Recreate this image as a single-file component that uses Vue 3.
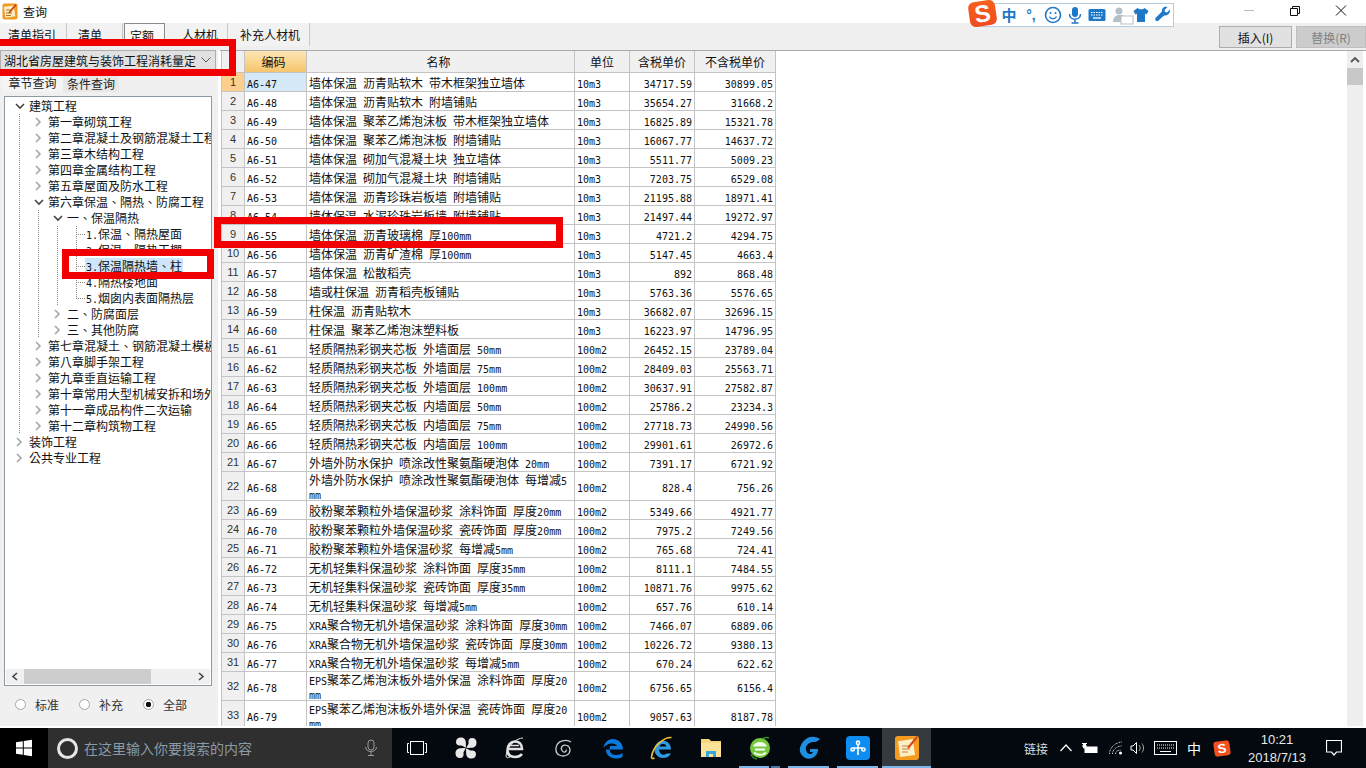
<template>
  <div class="screen">
    <div class="window">
      <!-- title bar -->
      <div class="titlebar">
        <svg class="app-icon" width="16" height="17" viewBox="0 0 16 17">
          <rect x="0.500" y="0.500" width="15" height="16" rx="2" fill="#f09a1e" />
          <rect x="2.500" y="3" width="10" height="11" fill="#fdeec4" transform="rotate(-8 8 8)" />
          <path d="M4 7h6M4 10h6M4 12.500h5" stroke="#b9722a" stroke-width="1" />
          <path d="M7 10L14 1.500" stroke="#c8401a" stroke-width="1.800" />
        </svg>
        <span class="title">查询</span>
        <div class="win-controls">
          <svg width="46" height="22" viewBox="0 0 46 22"><path d="M18 10.500h10" stroke="#b8b8b8" /></svg>
          <svg width="46" height="22" viewBox="0 0 46 22"><path d="M18.500 8.500h7v7h-7zM20.500 8V6.500h7v7H26" fill="none" stroke="#111" /></svg>
          <svg width="46" height="22" viewBox="0 0 46 22"><path d="M18 5.500l10 10M28 5.500l-10 10" stroke="#111" /></svg>
        </div>
      </div>

      <!-- tabs and actions -->
      <div class="toolbar">
        <div
          v-for="t in tabs"
          :key="t.name"
          class="tab"
          :class="{ pressed: t.pressed }"
          :style="{ width: t.w + 'px', paddingLeft: t.pad + 'px' }"
        >
          <span>{{ t.name }}</span>
        </div>
        <div class="actions">
          <button class="btn">插入(I)</button>
          <button class="btn disabled">替换(R)</button>
        </div>
      </div>

      <div class="body">
        <!-- left side -->
        <div class="side">
          <div class="select">
            <span class="select-text">湖北省房屋建筑与装饰工程消耗量定</span>
            <svg width="10" height="6" viewBox="0 0 10 6"><path d="M0.500 0.500L5 5l4.500-4.500" fill="none" stroke="#555" /></svg>
          </div>
          <div class="side-tabs">
            <span class="side-tab on">章节查询</span>
            <span class="side-tab">条件查询</span>
          </div>
          <div class="tree-box">
            <div class="tree">
              <div v-for="n in tree" :key="n.text" class="node">
                <i v-for="g in n.depth" :key="g" class="guide"></i>
                <i v-if="n.leaf" class="leaf" :class="{ last: n.last }"></i>
                <i v-else class="toggle">
                  <svg v-if="n.open" width="10" height="7" viewBox="0 0 10 7"><path d="M1 1l4 4 4-4" fill="none" stroke="#444" stroke-width="1.600" /></svg>
                  <svg v-else-if="n.arrow" width="7" height="10" viewBox="0 0 7 10"><path d="M1 1l4 4-4 4" fill="none" stroke="#a6a6a6" stroke-width="1.600" /></svg>
                </i>
                <span class="node-text" :class="{ selected: n.selected }">
                  <span v-for="(p, j) in splitRuns(n.text)" :key="j" :class="{ asc: p.asc }">{{ p.text }}</span>
                </span>
              </div>
            </div>
            <div class="hscroll">
              <svg width="18" height="15" viewBox="0 0 18 15"><path d="M11 4L7 7.500l4 3.500" fill="none" stroke="#444" stroke-width="1.600" /></svg>
              <div class="hscroll-track"><div class="hscroll-thumb"></div></div>
              <svg width="18" height="15" viewBox="0 0 18 15"><path d="M7 4l4 3.500L7 11" fill="none" stroke="#444" stroke-width="1.600" /></svg>
            </div>
          </div>
          <div class="radios">
            <label v-for="r in radios" :key="r.text" class="radio">
              <i class="dot" :class="{ checked: r.checked }"></i>{{ r.text }}
            </label>
          </div>
        </div>

        <!-- quota table -->
        <div class="main">
          <div class="table-wrap">
            <table class="grid">
              <colgroup>
                <col style="width: 23px" />
                <col style="width: 62px" />
                <col style="width: 268px" />
                <col style="width: 55px" />
                <col style="width: 65px" />
                <col style="width: 81px" />
              </colgroup>
              <thead>
                <tr>
                  <th></th>
                  <th class="sorted shifted">编码</th>
                  <th class="shifted">名称</th>
                  <th>单位</th>
                  <th>含税单价</th>
                  <th>不含税单价</th>
                </tr>
              </thead>
              <tbody>
                <tr v-for="(r, i) in rows" :key="r.code">
                  <td class="idx" :class="{ current: i === 0 }">{{ i + 1 }}</td>
                  <td :class="{ cursor: i === 0 }"><span class="asc">{{ r.code }}</span></td>
                  <td class="name">
                    <span v-for="(p, j) in splitRuns(r.name)" :key="j" :class="{ asc: p.asc }">{{ p.text }}</span>
                  </td>
                  <td><span class="asc">{{ r.unit }}</span></td>
                  <td class="num"><span class="asc">{{ r.tax }}</span></td>
                  <td class="num"><span class="asc">{{ r.noTax }}</span></td>
                </tr>
              </tbody>
            </table>
          </div>
          <div class="vscroll">
            <svg width="16" height="17" viewBox="0 0 16 17"><path d="M4 11l4-4 4 4" fill="none" stroke="#555" stroke-width="1.800" /></svg>
            <div class="vthumb"></div>
          </div>
        </div>
      </div>

      <!-- annotation boxes -->
      <div class="mark mark-select"></div>
      <div class="mark mark-node"></div>
      <div class="mark mark-row"></div>

      <!-- floating IME bar -->
      <div class="ime">
        <span class="ime-logo"><b>S</b></span>
        <span class="ime-item zh">中</span>
        <span class="ime-item punct">°,</span>
        <svg class="ime-item" width="20" height="20" viewBox="0 0 20 20"><circle cx="10" cy="10" r="7.500" fill="none" stroke="#1e78c8" stroke-width="1.600" /><circle cx="7.500" cy="8" r="1" fill="#1e78c8" /><circle cx="12.500" cy="8" r="1" fill="#1e78c8" /><path d="M6.500 11.500c1.500 3 5.500 3 7 0" fill="none" stroke="#1e78c8" stroke-width="1.300" /></svg>
        <svg class="ime-item" width="20" height="20" viewBox="0 0 20 20"><rect x="7" y="2" width="6" height="10" rx="3" fill="#1e78c8" /><path d="M4.500 9c0 7 11 7 11 0M10 14.500V18M6.500 18h7" fill="none" stroke="#1e78c8" stroke-width="1.500" /></svg>
        <svg class="ime-item" width="20" height="20" viewBox="0 0 20 20"><rect x="1.500" y="4" width="17" height="12" rx="1.500" fill="#1e78c8" /><path d="M4 7.500h12M4 10h12" stroke="#fff" stroke-dasharray="1.500 1" /><path d="M6 13h8" stroke="#fff" stroke-width="1.300" /></svg>
        <svg class="ime-item person" width="24" height="20" viewBox="0 0 24 20"><circle cx="9" cy="6" r="3.500" fill="#b4bfc8" /><path d="M3 17c0-5 3-7 6-7h4v7z" fill="#b4bfc8" /><rect x="11" y="11" width="12" height="8" fill="#fff" stroke="#b4bfc8" /></svg>
        <svg class="ime-item shirt" width="20" height="20" viewBox="0 0 20 20"><path d="M6.500 3L2.500 6l2 3.500 1.500-1V17h8V8.500l1.500 1 2-3.500-4-3c-1 1.800-5.500 1.800-7 0z" fill="#1e78c8" /></svg>
        <svg class="ime-item" width="20" height="20" viewBox="0 0 20 20"><path d="M17 4.500l-3 3-2-.5-.5-2 3-3c-3-1-6 1-5.500 4.500L3 12.500c-2 2 .5 5 2.500 3L11 10.500c3.500.5 6.500-2.500 6-6z" fill="#1e78c8" /></svg>
      </div>
    </div>

    <!-- taskbar -->
    <div class="taskbar">
      <div class="start">
        <svg width="18" height="18" viewBox="0 0 18 18"><path d="M1 3.200l6.800-1v6.200H1zM8.800 2l8.200-1.200v7.600H8.800zM1 9.600h6.800v6.200l-6.800-1zM8.800 9.600H17v7.600L8.800 16z" fill="#fff" /></svg>
      </div>
      <div class="search">
        <i class="cortana"></i>
        <span class="search-text">在这里输入你要搜索的内容</span>
        <svg width="14" height="18" viewBox="0 0 14 18"><rect x="4" y="1" width="6" height="10" rx="3" fill="none" stroke="#9a9a9a" /><path d="M1.500 8c0 6 11 6 11 0M7 13v3.500M4 16.500h6" fill="none" stroke="#9a9a9a" /></svg>
      </div>
      <div class="apps">
        <div class="app">
          <svg width="20" height="14" viewBox="0 0 20 14"><rect x="3.500" y=".500" width="13" height="13" fill="none" stroke="#fff" /><path d="M2 2.500H.500v9H2M18 2.500h1.500v9H18" fill="none" stroke="#fff" /></svg>
        </div>
        <div class="app">
          <svg width="22" height="22" viewBox="0 0 22 22"><g fill="#e8e8e8"><path d="M11 10.500C8 10 7.500 8 5.500 8.500 3 9 1 7.500 1 5c0-3 2-4.500 4.500-4.500 3.500 0 5 2 5.300 4.500z" /><path d="M11.500 11c.5-3 2.500-3.500 2-5.500C13 3 14.500 1 17 1c3 0 4.500 2 4.500 4.500 0 3.500-2 5-4.500 5.300z" /><path d="M11 11.500c3 .5 3.500 2.500 5.500 2 2.500-.5 4.500 1 4.500 3.500 0 3-2 4.500-4.500 4.500-3.500 0-5-2-5.300-4.500z" /><path d="M10.500 11c-.5 3-2.500 3.500-2 5.500.5 2.500-1 4.500-3.500 4.500-3 0-4.500-2-4.500-4.500 0-3.500 2-5 4.500-5.300z" /></g></svg>
        </div>
        <div class="app">
          <svg width="22" height="24" viewBox="0 0 22 24"><path d="M5 13h13C18 8 15 5.500 11 5.500S3.500 9 3.500 14 7 21 11 21c3 0 5.500-1 7-3" fill="none" stroke="#e4e4e4" stroke-width="2.600" /><path d="M6 9.500h9" stroke="#e4e4e4" stroke-width="1.500" /><path d="M19 2C13 2 3 9 2 20c0 2 2 2 4 1" fill="none" stroke="#e4e4e4" /></svg>
        </div>
        <div class="app">
          <svg width="20" height="20" viewBox="0 0 20 20"><path d="M17 4C13 1 3 2 2 10s7 9 11 7 4-8 0-9.500-7 2-5 5 5 1 4-1" fill="none" stroke="#c9c9c9" stroke-width="1.300" /></svg>
        </div>
        <div class="app">
          <svg width="22" height="22" viewBox="0 0 22 22"><path d="M4 12.500h17C21 6 16 2 10.500 2 6 2 2 6 1.500 11c2-3 5-4.500 8-4.500 3 0 5 1 5.500 2.500H8c-1 4 0 9 6 9 2.500 0 5-.8 6.500-2v4c-2 1-4 1.500-6.500 1.500C8 21.500 4 18 4 12.500z" fill="#0b78dc" /></svg>
        </div>
        <div class="app">
          <svg width="24" height="24" viewBox="0 0 24 24"><path d="M5 13.500h16C21 8 17 4.500 13 4.500S4.500 8 4.500 13.500 9 22 13 22c3.500 0 6.500-1.500 8-4.500h-4.500c-2.500 2.500-7 1.500-7.500-4zM9.500 10.500c.5-2 2-2.500 3.500-2.500s3 .5 3.500 2.500z" fill="#2f9be4" fill-rule="evenodd" /><path d="M21.500 1.500C14 1 3 10 1.500 21c-.2 2 2 1.500 3 1" fill="none" stroke="#f1c232" stroke-width="1.600" /></svg>
        </div>
        <div class="app">
          <svg width="22" height="20" viewBox="0 0 22 20"><path d="M1 1h8l2 2h10v16H1z" fill="#f5d67a" /><rect x="1" y="5" width="20" height="14" fill="#fbe39a" /><path d="M6 19v-6h10v6h-3v-3H9v3z" fill="#3aa6e0" /></svg>
        </div>
        <div class="app under split">
          <svg width="24" height="24" viewBox="0 0 24 24"><circle cx="12" cy="12" r="10" fill="#76c83e" /><path d="M5 10.500C6.500 4.500 17.500 4.500 19 10.500z" fill="#f2fbe8" /><path d="M7 13.500h10" stroke="#fff" stroke-width="2" /><path d="M6 16.500c3 3 9 3 12 0" fill="none" stroke="#f2fbe8" stroke-width="1.800" /><path d="M21 2c-2-1-4-.5-6 .5M3 18c1 3 3 4.500 6 5" fill="none" stroke="#2d8a22" stroke-width="1.500" /></svg>
        </div>
        <div class="app under">
          <svg width="24" height="24" viewBox="0 0 24 24"><path d="M23 3c-5-3-10-3-14 0C4 7 1 13 4 18c3 5 9 6 13 3 3-2 4-5 4-8h-8v3h3c-1 3-6 3-7-2-1-4 3-8 7-8 2 0 4 0 7-3z" fill="#1e8fe0" /></svg>
        </div>
        <div class="app under">
          <svg width="24" height="24" viewBox="0 0 24 24"><rect width="24" height="24" rx="4" fill="#0f8cf0" /><path d="M12 9c-2-1-2-4 0-4s2 3 0 4v10M12 12H6.500c-2 0-2 3 0 3s2-1.500 1.500-3M12 12h5.500c2 0 2 3 0 3s-2-1.500-1.500-3" fill="none" stroke="#fff" stroke-width="1.600" /></svg>
        </div>
        <div class="app under active">
          <svg width="24" height="24" viewBox="0 0 24 24"><rect width="24" height="24" rx="3" fill="#f39c1f" /><rect x="4" y="4" width="15" height="16" fill="#fdeec4" transform="rotate(-8 12 12)" /><path d="M7 10h8M7 13h8M7 16h6" stroke="#c08040" /><path d="M13 12L22 1" stroke="#d8451b" stroke-width="2" /></svg>
        </div>
      </div>
      <div class="tray">
        <span class="tray-link">链接</span>
        <svg class="t-up" width="12" height="8" viewBox="0 0 12 8"><path d="M.500 7l5.500-6 5.500 6" fill="none" stroke="#fff" stroke-width="1.200" /></svg>
        <svg class="t-bat" width="16" height="12" viewBox="0 0 16 12"><path d="M0 1.500h5M0 4h5M1.500 1.500h2v4.500h-2z" fill="#fff" stroke="#fff" /><rect x="2.500" y="4.500" width="13" height="6.500" fill="#fff" /></svg>
        <svg class="t-wifi" width="14" height="14" viewBox="0 0 14 14"><path d="M.500 13C.500 7 6 1.500 13 1M3.500 13c0-4 4-8 9-8M6.500 13c0-2 2-4 5-4" fill="none" stroke="#cfcfcf" stroke-dasharray="1 .6" /><circle cx="11.500" cy="12" r="1.500" fill="#fff" /></svg>
        <svg class="t-vol" width="16" height="14" viewBox="0 0 16 14"><path d="M1 5h2l3.500-3.500v11L3 9H1z" fill="none" stroke="#fff" /><path d="M9 4c1.500 2 1.500 4 0 6M12 2.500c2 3 2 6 0 9" fill="none" stroke="#aaa" /></svg>
        <svg class="t-kbd" width="23" height="14" viewBox="0 0 23 14"><rect x=".500" y=".500" width="22" height="13" fill="none" stroke="#fff" /><path d="M3 4h17M3 7h17" stroke="#fff" stroke-dasharray="1 1" /><path d="M6 10.500h11" stroke="#fff" /></svg>
        <span class="t-zh">中</span>
        <span class="t-sogou"><b>S</b></span>
        <div class="clock"><span>10:21</span><span>2018/7/13</span></div>
        <svg class="t-note" width="16" height="17" viewBox="0 0 16 17"><path d="M.500 .500h15v11.500h-5l-2.500 3-2.500-3h-5z" fill="none" stroke="#fff" stroke-width="1.200" /></svg>
      </div>
    </div>
  </div>
</template>

<script setup>
const tabs = [
  { name: '清单指引', w: 67, pad: 8 },
  { name: '清单', w: 56, pad: 11 },
  { name: '定额', w: 41, pad: 5, pressed: true },
  { name: '人材机', w: 58, pad: 12 },
  { name: '补充人材机', w: 82, pad: 12 }
]

const radios = [
  { text: '标准' },
  { text: '补充' },
  { text: '全部', checked: true }
]

const tree = [
  { depth: 0, open: true, text: '建筑工程' },
  { depth: 1, arrow: true, text: '第一章砌筑工程' },
  { depth: 1, arrow: true, text: '第二章混凝土及钢筋混凝土工程' },
  { depth: 1, arrow: true, text: '第三章木结构工程' },
  { depth: 1, arrow: true, text: '第四章金属结构工程' },
  { depth: 1, arrow: true, text: '第五章屋面及防水工程' },
  { depth: 1, open: true, text: '第六章保温、隔热、防腐工程' },
  { depth: 2, open: true, text: '一、保温隔热' },
  { depth: 3, leaf: true, text: '1.保温、隔热屋面' },
  { depth: 3, leaf: true, text: '2.保温、隔热工棚' },
  { depth: 3, leaf: true, selected: true, text: '3.保温隔热墙、柱' },
  { depth: 3, leaf: true, text: '4.隔热楼地面' },
  { depth: 3, leaf: true, last: true, text: '5.烟囱内表面隔热层' },
  { depth: 2, arrow: true, text: '二、防腐面层' },
  { depth: 2, arrow: true, text: '三、其他防腐' },
  { depth: 1, arrow: true, text: '第七章混凝土、钢筋混凝土模板及支架工程' },
  { depth: 1, arrow: true, text: '第八章脚手架工程' },
  { depth: 1, arrow: true, text: '第九章垂直运输工程' },
  { depth: 1, arrow: true, text: '第十章常用大型机械安拆和场外运输' },
  { depth: 1, arrow: true, text: '第十一章成品构件二次运输' },
  { depth: 1, arrow: true, text: '第十二章构筑物工程' },
  { depth: 0, arrow: true, text: '装饰工程' },
  { depth: 0, arrow: true, text: '公共专业工程' }
]

const raw = `A6-47|墙体保温 沥青贴软木 带木框架独立墙体|10m3|34717.59|30899.05
A6-48|墙体保温 沥青贴软木 附墙铺贴|10m3|35654.27|31668.2
A6-49|墙体保温 聚苯乙烯泡沫板 带木框架独立墙体|10m3|16825.89|15321.78
A6-50|墙体保温 聚苯乙烯泡沫板 附墙铺贴|10m3|16067.77|14637.72
A6-51|墙体保温 砌加气混凝土块 独立墙体|10m3|5511.77|5009.23
A6-52|墙体保温 砌加气混凝土块 附墙铺贴|10m3|7203.75|6529.08
A6-53|墙体保温 沥青珍珠岩板墙 附墙铺贴|10m3|21195.88|18971.41
A6-54|墙体保温 水泥珍珠岩板墙 附墙铺贴|10m3|21497.44|19272.97
A6-55|墙体保温 沥青玻璃棉 厚100mm|10m3|4721.2|4294.75
A6-56|墙体保温 沥青矿渣棉 厚100mm|10m3|5147.45|4663.4
A6-57|墙体保温 松散稻壳|10m3|892|868.48
A6-58|墙或柱保温 沥青稻壳板铺贴|10m3|5763.36|5576.65
A6-59|柱保温 沥青贴软木|10m3|36682.07|32696.15
A6-60|柱保温 聚苯乙烯泡沫塑料板|10m3|16223.97|14796.95
A6-61|轻质隔热彩钢夹芯板 外墙面层 50mm|100m2|26452.15|23789.04
A6-62|轻质隔热彩钢夹芯板 外墙面层 75mm|100m2|28409.03|25563.71
A6-63|轻质隔热彩钢夹芯板 外墙面层 100mm|100m2|30637.91|27582.87
A6-64|轻质隔热彩钢夹芯板 内墙面层 50mm|100m2|25786.2|23234.3
A6-65|轻质隔热彩钢夹芯板 内墙面层 75mm|100m2|27718.73|24990.56
A6-66|轻质隔热彩钢夹芯板 内墙面层 100mm|100m2|29901.61|26972.6
A6-67|外墙外防水保护 喷涂改性聚氨酯硬泡体 20mm|100m2|7391.17|6721.92
A6-68|外墙外防水保护 喷涂改性聚氨酯硬泡体 每增减5mm|100m2|828.4|756.26
A6-69|胶粉聚苯颗粒外墙保温砂浆 涂料饰面 厚度20mm|100m2|5349.66|4921.77
A6-70|胶粉聚苯颗粒外墙保温砂浆 瓷砖饰面 厚度20mm|100m2|7975.2|7249.56
A6-71|胶粉聚苯颗粒外墙保温砂浆 每增减5mm|100m2|765.68|724.41
A6-72|无机轻集料保温砂浆 涂料饰面 厚度35mm|100m2|8111.1|7484.55
A6-73|无机轻集料保温砂浆 瓷砖饰面 厚度35mm|100m2|10871.76|9975.62
A6-74|无机轻集料保温砂浆 每增减5mm|100m2|657.76|610.14
A6-75|XRA聚合物无机外墙保温砂浆 涂料饰面 厚度30mm|100m2|7466.07|6889.06
A6-76|XRA聚合物无机外墙保温砂浆 瓷砖饰面 厚度30mm|100m2|10226.72|9380.13
A6-77|XRA聚合物无机外墙保温砂浆 每增减5mm|100m2|670.24|622.62
A6-78|EPS聚苯乙烯泡沫板外墙外保温 涂料饰面 厚度20mm|100m2|6756.65|6156.4
A6-79|EPS聚苯乙烯泡沫板外墙外保温 瓷砖饰面 厚度20mm|100m2|9057.63|8187.78`

const rows = raw.split('\n').map(line => {
  const [code, name, unit, tax, noTax] = line.split('|')
  return { code, name, unit, tax, noTax }
})

// ascii runs get the narrow mono face, the rest stays CJK
const splitRuns = (text) =>
  text.match(/[\x00-\x7f]+|[^\x00-\x7f]+/g).map(t => ({ text: t, asc: /^[\x00-\x7f]/.test(t) }))
</script>

<style>
html, body {
  margin: 0;
  overflow: hidden;
}
</style>

<style scoped>
.screen {
  width: 1366px;
  height: 768px;
  display: flex;
  flex-direction: column;
  overflow: hidden;
  font-family: "Noto Sans CJK SC", sans-serif;
  font-size: 12px;
  color: #111;
}

.window {
  position: relative;
  height: 728px;
  display: flex;
  flex-direction: column;
  background: #fff;
  padding-bottom: 2px;
  box-sizing: border-box;
}

.titlebar {
  height: 23px;
  flex: none;
  display: flex;
  align-items: center;
  background: #fff;
  padding-left: 2px;
}

.app-icon {
  margin-right: 5px;
}

.win-controls {
  margin-left: auto;
  display: flex;
  margin-top: -2px;
  padding-right: 2px;
}

.toolbar {
  height: 27px;
  flex: none;
  display: flex;
  background: #efefef;
}

.tab {
  height: 23px;
  box-sizing: border-box;
  flex: none;
  border-right: 1px solid #c8c8c8;
  display: flex;
  align-items: center;
  background: #f2f2f2;
}

.tab.pressed {
  border: 1px solid #8a8a8a;
  border-bottom: none;
  margin: 0 5px 0 1px;
  background: #fafafa;
  box-shadow: 5px 0 0 #f2f2f2, 6px 0 0 #c8c8c8;
}

.actions {
  margin-left: auto;
  display: flex;
  gap: 4px;
  padding-top: 3px;
}

.btn {
  width: 73px;
  height: 22px;
  padding: 0;
  border: 1px solid #adadad;
  background: #e1e1e1;
  font-family: inherit;
  font-size: 12px;
  color: #111;
}

.btn.disabled {
  width: 70px;
  background: #ccc;
  border-color: #bfbfbf;
  color: #808080;
}

.body {
  flex: 1;
  min-height: 0;
  display: flex;
}

.side {
  width: 218px;
  flex: none;
  display: flex;
  flex-direction: column;
  margin-right: 2px;
  background: #f0f0f0;
}

.select {
  width: 216px;
  flex: none;
  height: 20px;
  box-sizing: border-box;
  padding: 0 4px 0 3px;
  background: #e1e1e1;
  border: 1px solid #adadad;
  display: flex;
  align-items: center;
  justify-content: space-between;
}

.select-text {
  white-space: nowrap;
}

.side-tabs {
  height: 20px;
  margin-top: 2px;
  flex: none;
  display: flex;
  padding-left: 2px;
}

.side-tab {
  width: 56px;
  text-align: center;
  line-height: 24px;
  background: #e8e8e8;
  color: #222;
}

.side-tab.on {
  width: 61px;
  line-height: 22px;
  background: #f4f4f4;
}

.tree-box {
  margin: 4px 6px 0 4px;
  height: 590px;
  flex: none;
  box-sizing: border-box;
  border: 1px solid #8e9aa3;
  background: #fff;
  display: flex;
  flex-direction: column;
}

.tree {
  flex: 1;
  min-height: 0;
  overflow: hidden;
  padding: 1px 0 0 5px;
}

.node {
  height: 16px;
  display: flex;
  align-items: center;
  white-space: nowrap;
}

.guide {
  width: 19px;
  height: 16px;
  flex: none;
  background: repeating-linear-gradient(to bottom, #888 0 1px, transparent 1px 2px) 9px 0 / 1px 100% no-repeat;
}

.toggle {
  width: 19px;
  height: 16px;
  flex: none;
  display: flex;
  align-items: center;
  justify-content: center;
}

.leaf {
  width: 19px;
  height: 16px;
  flex: none;
  background:
    repeating-linear-gradient(to bottom, #888 0 1px, transparent 1px 2px) 9px 0 / 1px 100% no-repeat,
    repeating-linear-gradient(to right, #888 0 1px, transparent 1px 2px) 9px 8px / 10px 1px no-repeat;
}

.leaf.last {
  background:
    repeating-linear-gradient(to bottom, #888 0 1px, transparent 1px 2px) 9px 0 / 1px 9px no-repeat,
    repeating-linear-gradient(to right, #888 0 1px, transparent 1px 2px) 9px 8px / 10px 1px no-repeat;
}

.node-text {
  margin-left: -1px;
  padding: 0 1px;
  line-height: 16px;
  font-family: "Noto Sans CJK TC", sans-serif;
}

.node-text.selected {
  background: #cde6fb;
}

.hscroll {
  height: 15px;
  margin: 0 1px 1px;
  flex: none;
  display: flex;
  background: #f0f0f0;
}

.hscroll-track {
  flex: 1;
}

.hscroll-thumb {
  width: 127px;
  height: 100%;
  background: #cdcdcd;
}

.radios {
  flex: 1;
  display: flex;
  padding: 10px 0 0 15px;
  gap: 20px;
}

.radio {
  display: flex;
  align-items: center;
  flex: none;
  gap: 9px;
  height: 16px;
  width: 44px;
  white-space: nowrap;
  color: #333;
}

.dot {
  width: 9px;
  height: 9px;
  flex: none;
  border: 1px solid #a5a5a5;
  border-radius: 50%;
  background: #fff;
}

.dot.checked {
  background: radial-gradient(circle, #111 0 2.500px, #fff 3px);
}

.main {
  flex: 1;
  min-width: 0;
  display: flex;
  background: #fff;
  border-top: 1px solid #a9a9a9;
  padding-left: 1px;
}

.table-wrap {
  flex: 1;
  overflow: hidden;
  height: 100%;
}

.grid {
  border-collapse: collapse;
  table-layout: fixed;
  width: 554px;
}

.grid th {
  height: 21px;
  padding: 0;
  font-weight: 400;
  background: #f0f0f0;
  border: 1px solid #c4c4c4;
  border-top: none;
}

.grid th.sorted {
  background: linear-gradient(to bottom, #fde6b4, #f6c46c);
}

.grid th.shifted {
  padding-right: 4px;
}

.grid td {
  height: 19px;
  box-sizing: border-box;
  padding: 0 2px;
  line-height: 13px;
  border: 1px solid #c4c4c4;
  word-break: break-all;
}

.grid td > span {
  position: relative;
  top: 1px;
}

.asc {
  font-family: "DejaVu Sans Mono", monospace;
  font-size: 10px;
  line-height: 10px;
}

.grid td.idx {
  padding: 0;
  text-align: center;
  background: #f0f0f0;
  font-family: "Liberation Sans", sans-serif;
  font-size: 11px;
  color: #333;
}

.grid td.idx.current {
  background: #fccf8c;
}

.cursor {
  background: #d5e8f8;
}

.num {
  text-align: right;
}

.vscroll {
  width: 16px;
  flex: none;
  margin-right: 3px;
  background: #eee;
}

.vscroll svg {
  display: block;
}

.vthumb {
  height: 17px;
  background: #c8c8c8;
}

.mark {
  position: absolute;
  box-sizing: border-box;
  border: 7px solid #f00000;
  pointer-events: none;
}

.mark-select {
  left: -7px;
  top: 39px;
  width: 243px;
  height: 37px;
}

.mark-node {
  left: 62px;
  top: 249px;
  width: 152px;
  height: 30px;
}

.mark-row {
  left: 214px;
  top: 217px;
  width: 349px;
  height: 31px;
}

.ime {
  position: absolute;
  left: 968px;
  top: 0;
  width: 206px;
  height: 27px;
  box-sizing: border-box;
  display: flex;
  align-items: center;
}

.ime::before {
  content: "";
  position: absolute;
  left: 8px;
  right: 0;
  top: 3px;
  bottom: 0;
  border: 1px solid #b5cde0;
  background: #fff;
}

.ime-logo {
  position: relative;
  width: 27px;
  height: 25px;
  margin: 0 0 0 1px;
  background: linear-gradient(to bottom, #f8601e, #f04a1e);
  border-radius: 6px;
  transform: rotate(-8deg);
  display: flex;
  align-items: center;
  justify-content: center;
  font-family: "Liberation Sans", sans-serif;
  font-size: 24px;
  color: #fff;
}

.ime-item {
  position: relative;
  flex: none;
  margin-left: 2px;
  margin-top: 3px;
}

.zh {
  margin-left: 3px;
  width: 20px;
  text-align: center;
  color: #1e78c8;
  font-size: 15px;
  font-weight: 700;
  line-height: 20px;
}

.punct {
  width: 20px;
  text-align: center;
  color: #1e78c8;
  font-family: "Liberation Sans", sans-serif;
  font-size: 14px;
  font-weight: 700;
  line-height: 18px;
}

.person {
  margin-left: 3px;
}

.shirt {
  margin-left: -3px;
}

.taskbar {
  height: 40px;
  flex: none;
  display: flex;
  background: #03090f;
}

.start {
  width: 48px;
  flex: none;
  background: #000;
  display: flex;
  align-items: center;
  justify-content: center;
}

.search {
  width: 344px;
  flex: none;
  background: #2f2f2f;
  display: flex;
  align-items: center;
  box-sizing: border-box;
  padding: 0 14px 0 9px;
}

.cortana {
  width: 15px;
  height: 15px;
  border: 3px solid #e6e6e6;
  border-radius: 50%;
  flex: none;
  margin-right: 6px;
}

.search-text {
  flex: 1;
  font-size: 14px;
  color: #8a9aa6;
}

.apps {
  display: flex;
}

.app {
  width: 49px;
  height: 40px;
  position: relative;
  display: flex;
  align-items: center;
  justify-content: center;
}

.app.under::after {
  content: "";
  position: absolute;
  left: 4px;
  right: 4px;
  bottom: 0;
  height: 2px;
  background: #7ab4e8;
}

.app.under.split::after {
  right: 15px;
  left: 4px;
  box-shadow: 32px 0 0 0 #4a7ba6;
  clip-path: inset(0 -11px 0 0);
}

.app.active {
  background: #353a3e;
}

.app.active::after {
  left: 0;
  right: 0;
}

.tray {
  flex: 1;
  display: flex;
  align-items: center;
  color: #fff;
}

.tray-link {
  margin-left: 93px;
  font-size: 12px;
  color: #ddd;
}

.t-up {
  margin-left: 12px;
}

.t-bat {
  margin-left: 10px;
}

.t-wifi {
  margin-left: 11px;
}

.t-vol {
  margin-left: 7px;
}

.t-kbd {
  margin-left: 8px;
}

.t-zh {
  margin-left: 10px;
  font-size: 14px;
}

.t-sogou {
  margin-left: 13px;
  width: 16px;
  height: 15px;
  background: #f4511e;
  border-radius: 3px;
  transform: rotate(-8deg);
  display: flex;
  align-items: center;
  justify-content: center;
  font-family: "Liberation Sans", sans-serif;
  font-size: 13px;
}

.clock {
  margin-left: 16px;
  padding-top: 2px;
  width: 62px;
  display: flex;
  flex-direction: column;
  align-items: center;
  font-family: "Liberation Sans", sans-serif;
  font-size: 13px;
  line-height: 18px;
  color: #e8e8e8;
}

.t-note {
  margin-left: 18px;
}
</style>
